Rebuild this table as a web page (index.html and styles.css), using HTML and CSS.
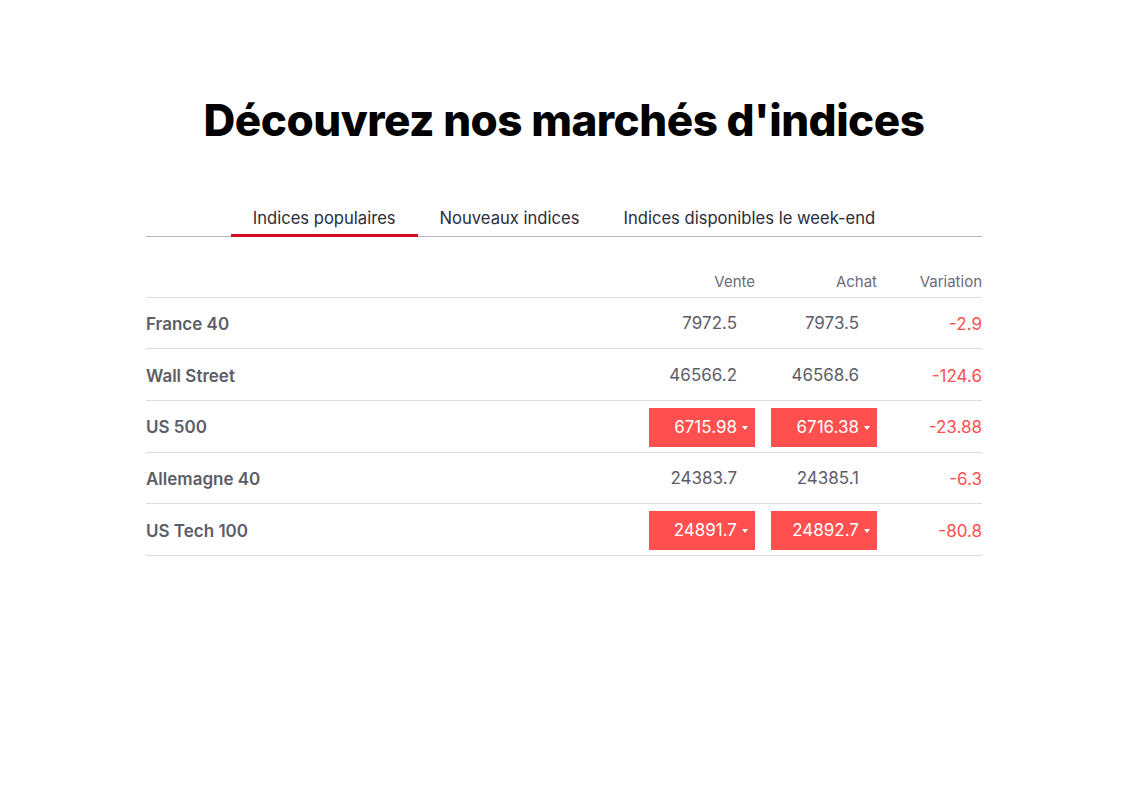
FILE: index.html
```html
<!DOCTYPE html>
<html lang="fr">
<head>
<meta charset="utf-8">
<link rel="stylesheet" href="styles.css">
</head>
<body>
<main class="page">
  <h1 class="title">Découvrez nos marchés d'indices</h1>
  <nav class="tabs">
    <span class="tab active">Indices populaires</span>
    <span class="tab">Nouveaux indices</span>
    <span class="tab">Indices disponibles le week-end</span>
  </nav>
  <table class="markets">
    <thead>
      <tr>
        <th class="name"></th>
        <th class="num">Vente</th>
        <th class="num">Achat</th>
        <th class="var">Variation</th>
      </tr>
    </thead>
    <tbody>
      <tr>
        <td class="name">France 40</td>
        <td class="num"><span class="price">7972.5</span></td>
        <td class="num"><span class="price">7973.5</span></td>
        <td class="var">-2.9</td>
      </tr>
      <tr>
        <td class="name">Wall Street</td>
        <td class="num"><span class="price">46566.2</span></td>
        <td class="num"><span class="price">46568.6</span></td>
        <td class="var">-124.6</td>
      </tr>
      <tr>
        <td class="name">US 500</td>
        <td class="num"><span class="price down">6715.98</span></td>
        <td class="num"><span class="price down">6716.38</span></td>
        <td class="var">-23.88</td>
      </tr>
      <tr>
        <td class="name">Allemagne 40</td>
        <td class="num"><span class="price">24383.7</span></td>
        <td class="num"><span class="price">24385.1</span></td>
        <td class="var">-6.3</td>
      </tr>
      <tr>
        <td class="name">US Tech 100</td>
        <td class="num"><span class="price down">24891.7</span></td>
        <td class="num"><span class="price down">24892.7</span></td>
        <td class="var">-80.8</td>
      </tr>
    </tbody>
  </table>
</main>
</body>
</html>
```

FILE: styles.css
```css
* { box-sizing: border-box; }
html, body { margin: 0; padding: 0; background: #fff; }
body {
  font-family: Inter, "Liberation Sans", sans-serif;
  color: #2d2d3a;
}
.page {
  width: 836px;
  margin: 0 auto;
  padding-top: 92px;
  position: relative;
  left: 3px;
}
.title {
  margin: 0;
  text-align: center;
  font-size: 44px;
  font-weight: 800;
  letter-spacing: -0.5px;
  line-height: 56px;
  color: #000;
}
.tabs {
  margin-top: 53px;
  display: flex;
  justify-content: center;
  border-bottom: 1px solid #b5b5b5;
}
.tab {
  font-size: 16.6px;
  color: #2d2d3a;
  padding: 0 22px;
  height: 36px;
  line-height: 34px;
  border-bottom: 3px solid transparent;
  margin-bottom: -1px;
}
.tab.active { border-bottom-color: #d20a22; }
.markets {
  width: 100%;
  border-collapse: collapse;
  margin-top: 27px;
}
.markets th {
  font-size: 15px;
  font-weight: 400;
  color: #6b6b78;
  height: 33px;
  vertical-align: top;
  border-bottom: 1px solid #dedede;
  padding: 8px 0 0;
}
.markets td {
  height: 51.7px;
  border-bottom: 1px solid #dedede;
  padding: 2px 0 0;
  font-size: 17px;
}
.markets .name { text-align: left; }
td.name { font-weight: 600; color: #5d5d68; }
.markets .num { width: 122px; text-align: right; }
.markets .var { width: 105px; text-align: right; }
td.var { color: #ff4f4f; }
.price {
  display: inline-block;
  width: 106px;
  height: 39px;
  line-height: 39px;
  padding-right: 18px;
  text-align: right;
  color: #5d5d68;
  vertical-align: middle;
}
.price.down {
  background: #ff4f4f;
  color: #fff;
  position: relative;
}
.price.down::after {
  content: "";
  position: absolute;
  right: 7px;
  top: 18px;
  border-left: 3.5px solid transparent;
  border-right: 3.5px solid transparent;
  border-top: 4px solid #fff;
}
```
